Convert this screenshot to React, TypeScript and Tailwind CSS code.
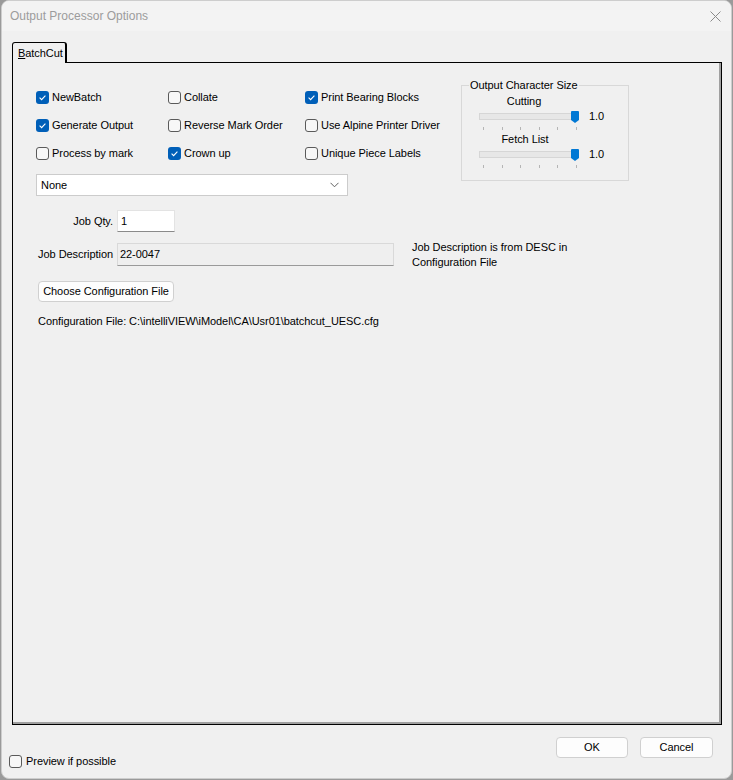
import React from "react";

const font = { fontFamily: '"Liberation Sans", Arial, sans-serif' };

function Check({ checked }: { checked?: boolean }) {
  if (checked) {
    return (
      <span className="flex h-[13px] w-[13px] shrink-0 items-center justify-center rounded-[3px] bg-[#005fb8]">
        <svg width="9" height="9" viewBox="0 0 9 9">
          <path d="M1.6 4.7 L3.6 6.6 L7.4 2.6" fill="none" stroke="white" strokeWidth="1.1" />
        </svg>
      </span>
    );
  }
  return <span className="block h-[13px] w-[13px] shrink-0 rounded-[3px] border border-[#5a5a5a] bg-[#f7f7f7]" />;
}

function CB({ label, checked }: { label: string; checked?: boolean }) {
  return (
    <div className="flex h-[28px] items-center gap-[3px] whitespace-nowrap">
      <Check checked={checked} />
      <span>{label}</span>
    </div>
  );
}

function Slider() {
  return (
    <div>
      <div className="ml-[17px] flex h-[12px] items-center">
        <div className="relative h-[7px] w-[97px] border border-[#d6d6d6] bg-[#e7e7e7]">
          <svg className="absolute right-[-4px] top-[-3px]" width="8" height="12" viewBox="0 0 8 12">
            <path d="M1 0 H7 Q8 0 8 1 V9 L4 12 L0 9 V1 Q0 0 1 0 Z" fill="#0078d4" />
          </svg>
        </div>
        <span className="ml-[13px]">1.0</span>
      </div>
      <div className="ml-[21px] mt-[5px] flex h-[3px] w-[94px] justify-between">
        {[0, 1, 2, 3, 4, 5].map((i) => (
          <span key={i} className="block h-[3px] w-px bg-[#b5b5b5]" />
        ))}
      </div>
    </div>
  );
}

export default function App() {
  return (
    <div className="h-[780px] w-[733px] bg-[#9a9a9a] pl-[1px] text-[11px] leading-[13px] tracking-[-0.06px] text-black" style={font}>
      <div className="flex h-[779px] w-[731px] flex-col overflow-hidden rounded-[8px] border border-[#cdcdcd] bg-[#f0f0f0]">
        {/* title bar */}
        <div className="flex h-[30px] shrink-0 items-center justify-between bg-[#f3f3f3] pl-[8px] pr-[10px]">
          <span className="text-[12px] tracking-normal text-[#9c9c9c]">Output Processor Options</span>
          <svg width="11" height="11" viewBox="0 0 11 11">
            <path d="M0.5 0.5 L10.5 10.5 M10.5 0.5 L0.5 10.5" stroke="#8a8a8a" strokeWidth="1" />
          </svg>
        </div>

        {/* tab */}
        <div className="ml-[10px] mt-[11px] flex">
          <div className="relative z-10 -mb-px flex h-[21px] w-[55px] items-start rounded-t-[3px] border-l border-r-2 border-t border-black bg-[#f0f0f0] pl-[5px] pt-[4px]">
            <span>
              <span className="underline">B</span>atchCut
            </span>
          </div>
        </div>

        {/* panel */}
        <div className="ml-[10px] h-[663px] w-[710px] border border-black pl-[23px] pt-[16px] shadow-[inset_-2px_-2px_0_#a0a0a0]">
          <div className="flex items-start">
            <div className="w-[311px] shrink-0 pt-[4px]">
              <div className="grid w-max grid-cols-[132px_137px_140px]">
                <CB label="NewBatch" checked />
                <CB label="Collate" />
                <CB label="Print Bearing Blocks" checked />
                <CB label="Generate Output" checked />
                <CB label="Reverse Mark Order" />
                <CB label="Use Alpine Printer Driver" />
                <CB label="Process by mark" />
                <CB label="Crown up" checked />
                <CB label="Unique Piece Labels" />
              </div>
              <div className="mt-[7px] flex h-[22px] w-[312px] items-center justify-between border border-[#cccccc] bg-white pl-[4px] pr-[8px]">
                <span>None</span>
                <svg width="9" height="6" viewBox="0 0 9 6">
                  <path d="M0.5 0.8 L4.5 4.8 L8.5 0.8" fill="none" stroke="#606060" strokeWidth="1" />
                </svg>
              </div>
            </div>
            <fieldset className="ml-[114px] h-[102px] w-[168px] shrink-0 border border-[#d8d8d8]">
              <legend className="ml-[7px] px-px leading-[13px]">Output Character Size</legend>
              <div className="ml-[14px] mt-[3px] w-[96px] text-center leading-[13px]">Cutting</div>
              <div className="mt-[2px]">
                <Slider />
              </div>
              <div className="ml-[15px] mt-[3px] w-[96px] text-center leading-[13px]">Fetch List</div>
              <div className="mt-[2px]">
                <Slider />
              </div>
            </fieldset>
          </div>

          {/* Job qty */}
          <div className="mt-[14px] flex h-[22px] items-center">
            <span className="w-[77px] text-right">Job Qty.</span>
            <div className="ml-[4px] flex h-[22px] w-[58px] items-center border border-[#e3e3e3] border-b-[#8a8a8a] bg-white pl-[3px]">
              1
            </div>
          </div>

          {/* Job description */}
          <div className="mt-[8px] flex items-start">
            <div className="mt-[3px] flex h-[23px] items-center">
              <span className="w-[77px] text-right">Job Description</span>
              <div className="ml-[4px] flex h-[23px] w-[277px] items-center border border-[#d9d9d9] border-b-[#9a9a9a] bg-[#efefef] pl-[2px]">
                22-0047
              </div>
            </div>
            <div className="ml-[18px] leading-[15px]">
              Job Description is from DESC in
              <br />
              Configuration File
            </div>
          </div>

          <button className="ml-[2px] mt-[11px] flex h-[21px] w-[136px] items-center justify-center rounded-[4px] border border-[#d0d0d0] bg-[#fdfdfd]">
            Choose Configuration File
          </button>

          <div className="ml-[2px] mt-[13px]">Configuration File: C:\intelliVIEW\iModel\CA\Usr01\batchcut_UESC.cfg</div>
        </div>

        {/* footer */}
        <div className="flex items-start justify-between pl-[7px] pr-[18px]">
          <div className="mt-[30px] flex items-center gap-[4px]">
            <Check />
            <span>Preview if possible</span>
          </div>
          <div className="mt-[12px] flex gap-[12px]">
            <button className="flex h-[21px] w-[72px] items-center justify-center rounded-[4px] border border-[#d0d0d0] bg-[#fdfdfd]">
              OK
            </button>
            <button className="flex h-[21px] w-[73px] items-center justify-center rounded-[4px] border border-[#d0d0d0] bg-[#fdfdfd]">
              Cancel
            </button>
          </div>
        </div>
      </div>
    </div>
  );
}
